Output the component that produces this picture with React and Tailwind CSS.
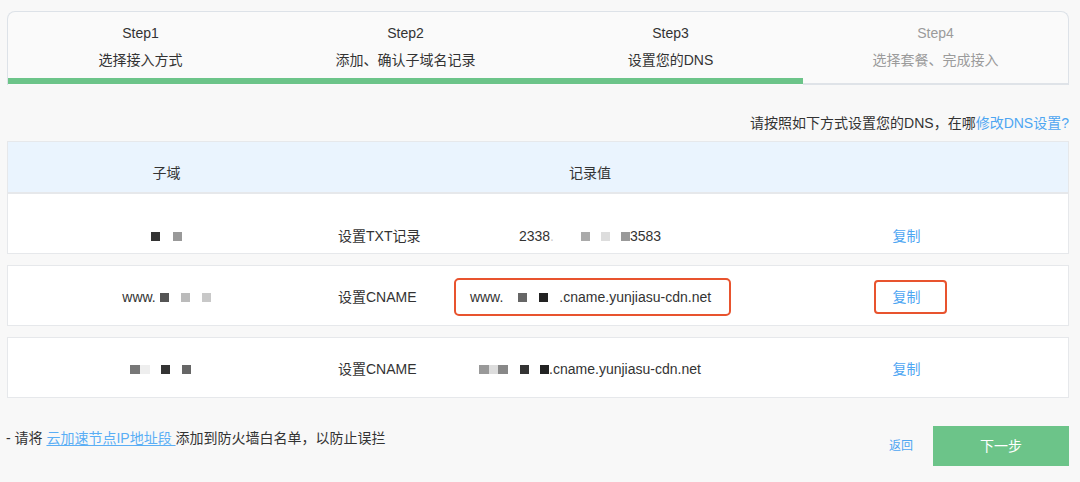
import React from "react";

const steps = [
  { title: "Step1", desc: "选择接入方式", done: true },
  { title: "Step2", desc: "添加、确认子域名记录", done: true },
  { title: "Step3", desc: "设置您的DNS", done: true },
  { title: "Step4", desc: "选择套餐、完成接入", done: false },
];

// masked characters in the records are shown as little grey squares
function Dot({ className }) {
  return <i className={`inline-block h-[9px] w-[9px] shrink-0 ${className}`} />;
}

function CopyLink({ boxed }) {
  if (boxed) {
    return (
      <span className="ml-[7px] inline-flex h-[34px] items-center rounded-[4px] border-2 border-[#e8532e] pl-[17px] pr-[24px] text-[#4ea6f2]">
        复制
      </span>
    );
  }
  return <span className="text-[#4ea6f2]">复制</span>;
}

function Row({ sub, type, value, boxed, first }) {
  return (
    <div
      className={`grid h-[61px] grid-cols-[317px_110px_310px_1fr] border border-[#e6e8eb] bg-white ${
        first ? "items-start pt-[32px]" : "mt-[11px] items-center pt-[3px]"
      }`}
    >
      <div className="flex h-[20px] items-center justify-center">{sub}</div>
      <div className="pl-[13px]">{type}</div>
      <div className="flex justify-center">
        {boxed ? (
          <div className="ml-[5px] flex h-[38px] items-center rounded-[5px] border-2 border-[#e8532e] pl-[14px] pr-[18px]">
            {value}
          </div>
        ) : (
          value
        )}
      </div>
      <div className="flex justify-center">
        <CopyLink boxed={boxed} />
      </div>
    </div>
  );
}

export default function App() {
  return (
    <div
      className="min-h-[482px] w-[1080px] bg-[#f8f8f8] pl-[7px] pr-[11px] pt-[11px] text-[14px] leading-[20px] text-[#333]"
      style={{ fontFamily: '"Liberation Sans", "Noto Sans CJK SC", sans-serif' }}
    >
      {/* progress steps */}
      <div className="overflow-hidden rounded-t-[8px] border border-b-0 border-[#dde2e8] bg-[#fafafa]">
        <div className="grid h-[66px] grid-cols-4">
          {steps.map((s) => (
            <div
              key={s.title}
              className={`pt-[11px] text-center ${s.done ? "text-[#333]" : "text-[#9b9b9b]"}`}
            >
              <div>{s.title}</div>
              <div className="mt-[7px]">{s.desc}</div>
            </div>
          ))}
        </div>
        <div className="flex h-[7px]">
          <div className="h-[6px] w-3/4 bg-[#6cc489]" />
          <div className="flex-1 border-b-2 border-[#dfe3e8]" />
        </div>
      </div>

      <p className="mt-[28px] text-right">
        请按照如下方式设置您的DNS，在哪<span className="text-[#4ea6f2]">修改DNS设置?</span>
      </p>

      {/* records table */}
      <div className="mt-[8px] grid h-[52px] grid-cols-[317px_110px_310px_1fr] items-start border border-[#e6e8eb] bg-[#eaf4fe] pt-[21px]">
        <div className="text-center">子域</div>
        <div />
        <div className="text-center">记录值</div>
        <div />
      </div>

      <Row
        first
        type="设置TXT记录"
        sub={
          <>
            <Dot className="bg-[#333]" />
            <Dot className="ml-[13px] bg-[#999]" />
          </>
        }
        value={
          <div className="flex h-[20px] items-center">
            <span>2338</span>
            <span className="text-[#ccc]">.</span>
            <Dot className="ml-[27px] bg-[#aaa]" />
            <Dot className="ml-[11px] bg-[#ddd]" />
            <Dot className="ml-[11px] bg-[#999]" />
            <span>3583</span>
          </div>
        }
      />

      <Row
        boxed
        type="设置CNAME"
        sub={
          <>
            <span>www.</span>
            <Dot className="ml-[4px] bg-[#555]" />
            <Dot className="ml-[12px] bg-[#bbb]" />
            <Dot className="ml-[12px] bg-[#c8c8c8]" />
          </>
        }
        value={
          <div className="flex items-center">
            <span>www.</span>
            <Dot className="ml-[15px] bg-[#666]" />
            <Dot className="ml-[12px] bg-[#222]" />
            <span className="ml-[11px]">.cname.yunjiasu-cdn.net</span>
          </div>
        }
      />

      <Row
        type="设置CNAME"
        sub={
          <span className="mr-[12px] flex items-center">
            <Dot className="w-[10px] bg-[#777]" />
            <Dot className="w-[10px] bg-[#eee]" />
            <Dot className="ml-[11px] bg-[#333]" />
            <Dot className="ml-[12px] bg-[#666]" />
          </span>
        }
        value={
          <div className="flex items-center">
            <Dot className="w-[10px] bg-[#999]" />
            <Dot className="bg-[#ddd]" />
            <Dot className="w-[10px] bg-[#888]" />
            <Dot className="ml-[12px] bg-[#333]" />
            <Dot className="ml-[11px] bg-[#222]" />
            <span>.cname.yunjiasu-cdn.net</span>
          </div>
        }
      />

      {/* footer */}
      <div className="mt-[28px] flex items-start justify-between">
        <p className="-ml-[1px] mt-[2px]">
          - 请将{" "}
          <span className="text-[#5aaef5] underline underline-offset-2">云加速节点IP地址段 </span>
          添加到防火墙白名单，以防止误拦
        </p>
        <div className="flex items-center">
          <span className="text-[12px] text-[#4ea6f2]">返回</span>
          <button className="ml-[20px] h-[40px] w-[136px] bg-[#6cc489] text-[14px] text-white">
            下一步
          </button>
        </div>
      </div>
    </div>
  );
}
